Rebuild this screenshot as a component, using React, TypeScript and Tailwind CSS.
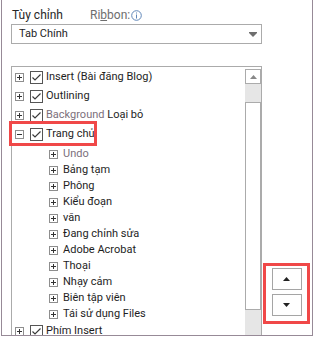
import React from "react";

// Small tree glyphs
const Expander = ({ open }: { open?: boolean }) => (
  <span className="flex h-[9px] w-[9px] shrink-0 items-center justify-center border border-[#8e8e8e] bg-white">
    <svg width="7" height="7" viewBox="0 0 7 7" fill="#333">
      <rect x="1" y="3" width="5" height="1" />
      {!open && <rect x="3" y="1" width="1" height="5" />}
    </svg>
  </span>
);

const Check = () => (
  <span className="flex h-[13px] w-[13px] shrink-0 items-center justify-center border border-[#555] bg-white">
    <svg width="11" height="11" viewBox="0 0 11 11">
      <path d="M1.5 5.5L4 8L9.5 2.5" stroke="#3a3a3a" strokeWidth="1.2" fill="none" />
    </svg>
  </span>
);

const TopRow = ({ children, open }: { children: React.ReactNode; open?: boolean }) => (
  <div className="relative flex h-[19px] items-center pl-[3px]">
    <Expander open={open} />
    <span className="ml-[6px]"><Check /></span>
    <span className="ml-[3px] whitespace-nowrap">{children}</span>
  </div>
);

const SubRow = ({ children, muted }: { children: React.ReactNode; muted?: boolean }) => (
  <div className="flex h-[16px] items-center pl-[37px]">
    <Expander />
    <span className={`ml-[5px] whitespace-nowrap ${muted ? "text-[#7c707c]" : ""}`}>{children}</span>
  </div>
);

const subItems = [
  "Bảng tạm",
  "Phông",
  "Kiểu đoạn",
  "văn",
  "Đang chỉnh sửa",
  "Adobe Acrobat",
  "Thoại",
  "Nhạy cảm",
  "Biên tập viên",
  "Tái sử dụng Files",
];

export default function App() {
  return (
    <div className="h-[338px] w-[314px] bg-white text-[11px] text-[#1e1e1e] [font-family:Roboto,'Noto_Sans',sans-serif]">
      <div className="ml-[1px] h-[336px] w-[312px] overflow-hidden border-x border-b border-[#978a97] pl-[9px]">

        {/* label row */}
        <div className="mt-[7px] flex h-[16px] items-center text-[12px]">
          <span className="w-[79px] pl-[1px] text-[#262626]">Tùy chỉnh</span>
          <span className="text-[#6e6e6e]">
            Ri<span className="underline">b</span>bon:
          </span>
          <svg width="11" height="11" viewBox="0 0 11 11" className="ml-[1px]">
            <circle cx="5.5" cy="5.5" r="4.8" fill="none" stroke="#5f86b8" strokeWidth="1" />
            <rect x="5" y="2.5" width="1" height="1" fill="#5f86b8" />
            <rect x="5" y="4.5" width="1" height="4" fill="#5f86b8" />
          </svg>
        </div>

        {/* dropdown */}
        <div className="mt-[1px] flex h-[20px] w-[251px] items-center justify-between border border-[#ababab] pl-[7px] pr-[4px]">
          <span>Tab Chính</span>
          <svg width="8" height="5" viewBox="0 0 8 5" fill="#6e6e6e">
            <path d="M0 0H8V1L4 5L0 1Z" />
          </svg>
        </div>

        <div className="mt-[22px] flex">
          {/* tree list */}
          <div className="flex h-[280px] w-[251px] border border-[#ababab]">
            <div className="flex-1 pt-[1px]">
              <TopRow>Insert (Bài đăng Blog)</TopRow>
              <TopRow>Outlining</TopRow>
              <TopRow>
                <span className="text-[#7c707c]">Background</span> Loại bỏ
              </TopRow>
              <TopRow open>
                Trang chủ
                <span className="absolute left-[-3px] top-[-4px] h-[25px] w-[88px] border-[3px] border-[#f04848]" />
              </TopRow>
              <div className="mt-[2px]">
                <SubRow muted>Undo</SubRow>
                {subItems.map((s) => (
                  <SubRow key={s}>{s}</SubRow>
                ))}
              </div>
              <TopRow>Phím Insert</TopRow>
            </div>

            {/* scrollbar */}
            <div className="flex w-[16px] flex-col pt-[2px]">
              <div className="flex h-[15px] items-center justify-center border border-[#ababab] bg-white">
                <svg width="7" height="4" viewBox="0 0 7 4" fill="#888">
                  <path d="M3.5 0L7 4H0Z" />
                </svg>
              </div>
              <div className="h-[18px] bg-[#e6e6e6]" />
              <div className="h-[208px] border border-[#ababab] bg-white" />
              <div className="flex-1 bg-[#e6e6e6]" />
            </div>
          </div>

          {/* move up / down */}
          <div className="ml-[1px] mt-[197px]">
            <div className="flex h-[61px] w-[47px] flex-col items-center gap-[4px] border-[3px] border-[#f04848] pt-[2px]">
              <div className="flex h-[22px] w-[30px] items-center justify-center border border-[#a5a5a5] bg-white">
                <svg width="7" height="4" viewBox="0 0 7 4" fill="#222">
                  <path d="M3.5 0L7 4H0Z" />
                </svg>
              </div>
              <div className="flex h-[22px] w-[30px] items-center justify-center border border-[#a5a5a5] bg-white">
                <svg width="7" height="4" viewBox="0 0 7 4" fill="#222">
                  <path d="M0 0H7L3.5 4Z" />
                </svg>
              </div>
            </div>
          </div>
        </div>
      </div>
    </div>
  );
}
